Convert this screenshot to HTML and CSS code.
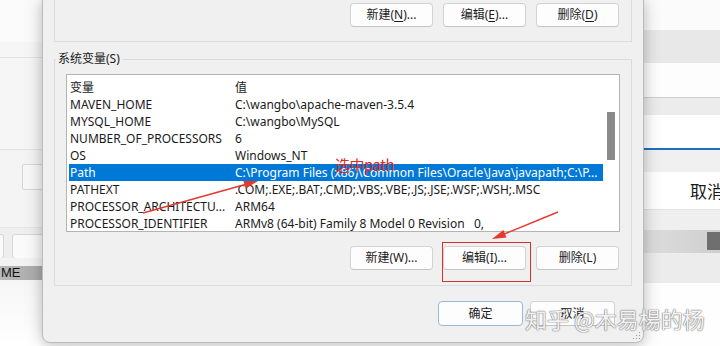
FILE: index.html
```html
<!DOCTYPE html>
<html lang="zh-CN">
<head>
<meta charset="utf-8">
<title>环境变量</title>
<link rel="stylesheet" href="styles.css">
</head>
<body>
<div class="desk">
  <div class="bg-left">
    <div class="bl-a"></div>
    <div class="bl-b"></div>
    <div class="bl-c"><div class="bl-input"></div></div>
    <div class="bl-d"><div class="bl-btn bl-btn1"></div><div class="bl-btn bl-btn2"></div></div>
    <div class="bl-e"></div>
    <div class="bl-f"><span>ME</span></div>
    <div class="bl-g"></div>
  </div>

  <div class="bg-right">
    <div class="br br-1"></div>
    <div class="br br-2"></div>
    <div class="br br-3"></div>
    <div class="br br-4"></div>
    <div class="br br-5"></div>
    <div class="br br-6"></div>
    <div class="br br-7"></div>
    <div class="br br-8">取消</div>
    <div class="br br-9"></div>
    <div class="br br-10"><div class="br-block"></div></div>
    <div class="br br-11"></div>
    <div class="br br-12"></div>
  </div>

  <div class="dialog">
    <div class="group-top">
      <div class="btn-row">
        <button class="btn">新建(<u>N</u>)...</button>
        <button class="btn">编辑(<u>E</u>)...</button>
        <button class="btn">删除(<u>D</u>)</button>
      </div>
    </div>

    <fieldset class="group-sys">
      <legend>系统变量(S)</legend>
      <div class="list">
        <div class="rows">
          <div class="row head"><span>变量</span><span>值</span></div>
          <div class="row"><span>MAVEN_HOME</span><span>C:\wangbo\apache-maven-3.5.4</span></div>
          <div class="row"><span>MYSQL_HOME</span><span>C:\wangbo\MySQL</span></div>
          <div class="row"><span>NUMBER_OF_PROCESSORS</span><span>6</span></div>
          <div class="row"><span>OS</span><span>Windows_NT</span></div>
          <div class="row sel"><span>Path</span><span>C:\Program Files (x86)\Common Files\Oracle\Java\javapath;C:\P...</span></div>
          <div class="row"><span>PATHEXT</span><span>.COM;.EXE;.BAT;.CMD;.VBS;.VBE;.JS;.JSE;.WSF;.WSH;.MSC</span></div>
          <div class="row"><span>PROCESSOR_ARCHITECTU...</span><span>ARM64</span></div>
          <div class="row"><span>PROCESSOR_IDENTIFIER</span><span>ARMv8 (64-bit) Family 8 Model 0 Revision&nbsp;&nbsp;&nbsp;0,</span></div>
        </div>
        <div class="scroll"><div class="thumb"></div></div>
      </div>
      <div class="btn-row btn-row-sys">
        <button class="btn">新建(W)...</button>
        <button class="btn">编辑(I)...</button>
        <button class="btn">删除(L)</button>
      </div>
    </fieldset>

    <div class="footer">
      <button class="btn btn-ok">确定</button>
      <button class="btn btn-cancel">取消</button>
    </div>

    <svg class="grip" width="8" height="8" viewBox="0 0 8 8">
      <rect x="6" y="0" width="1" height="1" fill="#9a9a9a"/>
      <rect x="3" y="3" width="1" height="1" fill="#9a9a9a"/>
      <rect x="6" y="3" width="1" height="1" fill="#9a9a9a"/>
      <rect x="0" y="6" width="1" height="1" fill="#9a9a9a"/>
      <rect x="3" y="6" width="1" height="1" fill="#9a9a9a"/>
      <rect x="6" y="6" width="1" height="1" fill="#9a9a9a"/>
    </svg>
  </div>

  <div class="note">选中path</div>
  <div class="redbox"></div>
  <svg class="arrows" width="720" height="346" viewBox="0 0 720 346">
    <line x1="143" y1="213" x2="247" y2="184" stroke="#e3392f" stroke-width="1.4"/>
    <polygon points="258,181 245.6,188.6 243.4,180.9" fill="#e3392f"/>
    <line x1="558" y1="212" x2="503" y2="234.5" stroke="#e3392f" stroke-width="1.4"/>
    <polygon points="492,239 506.5,237.4 503.4,230" fill="#e3392f"/>
  </svg>
  <div class="watermark">知乎 @木易楊的杨</div>
</div>
</body>
</html>
```

FILE: styles.css
```css
* { box-sizing: border-box; }
html, body { margin: 0; padding: 0; }
body {
  width: 720px;
  height: 346px;
  overflow: hidden;
  background: #ffffff;
  font-family: "Noto Sans", "Noto Sans CJK SC", sans-serif;
  font-size: 12px;
  color: #1b1b1b;
}
.desk { position: relative; width: 720px; height: 346px; overflow: hidden; }

/* background window, left */
.bg-left { position: absolute; left: 0; top: 0; width: 60px; height: 346px; display: flex; flex-direction: column; }
.bl-a { height: 58px; background: #fbfbfb; border-bottom: 1px solid #e4e4e4; box-shadow: inset 0 -15px 0 #f6f6f6; }
.bl-b { height: 92px; background: #f6f6f6; border-bottom: 1px solid #e2e2e2; }
.bl-c { height: 77px; background: #f4f4f4; padding: 14px 0 0 22px; }
.bl-input { height: 26px; border: 1px solid #d6d6d6; background: #f8f8f8; border-radius: 2px; }
.bl-d { height: 31px; background: #efefef; display: flex; gap: 8px; padding: 6px 0 0 0; border-top: 1px solid #e6e6e6; }
.bl-btn { height: 25px; background: #fafafa; border: 1px solid #d6d6d6; border-radius: 3px; }
.bl-btn1 { width: 4px; border-left: none; border-radius: 0 3px 3px 0; }
.bl-btn2 { width: 40px; }
.bl-e { height: 8px; background: #f3f3f3; }
.bl-f { height: 14px; background: linear-gradient(90deg, #b9b9b9, #a4a4a4); }
.bl-f span { display: block; font-family: "Liberation Sans", sans-serif; font-size: 13px; line-height: 14px; color: #111; padding-left: 1px; }
.bl-g { flex: 1; background: linear-gradient(180deg, #f6f6f6, #ffffff); }

/* background window, right */
.bg-right { position: absolute; left: 630px; top: 0; width: 90px; height: 346px; display: flex; flex-direction: column; }
.br { flex: none; }
.br-1 { height: 30px; background: #fbfbfb; }
.br-2 { height: 33px; background: #e8e8e8; }
.br-3 { height: 34px; background: #fdfdfd; }
.br-4 { height: 1px; background: #cfcfcf; }
.br-5 { height: 17px; background: #ececec; }
.br-6 { height: 33px; background: #ffffff; }
.br-7 { height: 24px; background: #f0f0f0; border-top: 2px solid #1f6fbf; }
.br-8 { height: 38px; background: #ffffff; font-family: "Noto Sans CJK SC", sans-serif; font-size: 17px; line-height: 38px; padding-left: 60px; color: #1a1a1a; border-bottom: 1px solid #e2e2e2; white-space: nowrap; overflow: hidden; }
.br-9 { height: 20px; background: #efefef; }
.br-10 { height: 23px; background: linear-gradient(90deg, #e0e0e0, #cfcfcf); padding: 2px 0 0 77px; }
.br-block { width: 20px; height: 18px; background: #6f6f6f; }
.br-11 { height: 30px; background: #ececec; }
.br-12 { flex: 1; background: #fefefe; }

/* dialog */
.dialog {
  position: absolute;
  left: 42px;
  top: -1px;
  width: 602px;
  height: 344px;
  background: #f0f0f0;
  border: 1px solid #bcbcbc;
  border-radius: 0 0 8px 8px;
  box-shadow: 0 0 18px rgba(0, 0, 0, 0.22), 0 4px 10px rgba(0, 0, 0, 0.08);
  padding: 0 11px;
}
.group-top {
  border: 1px solid #dcdcdc;
  border-top: none;
  padding: 3px 12px 14px 0;
}
.btn-row { display: flex; justify-content: flex-end; gap: 10px; }
.btn {
  width: 83px;
  height: 24px;
  padding: 0;
  margin: 0;
  background: #fdfdfd;
  border: 1px solid #d3d3d3;
  border-bottom-color: #c4c4c4;
  border-radius: 4px;
  font-family: "Noto Sans", "Noto Sans CJK SC", sans-serif;
  font-size: 12px;
  color: #1b1b1b;
  line-height: 22px;
}
.btn u { text-decoration-thickness: 1px; text-underline-offset: 2px; }

.group-sys {
  margin: 9px 0 0 0;
  padding: 7px 11px 15px 11px;
  border: 1px solid #dcdcdc;
  min-width: 0;
}
.group-sys legend {
  padding: 0 2px;
  margin-left: -10px;
  line-height: 16px;
  font-size: 12px;
  color: #1b1b1b;
}
.list {
  height: 158px;
  background: #ffffff;
  border: 1px solid #b4b4b4;
  display: flex;
  overflow: hidden;
}
.rows { flex: 1; padding: 4px 0 0 2px; min-width: 0; }
.row {
  display: grid;
  grid-template-columns: 165px 1fr;
  height: 17px;
  white-space: nowrap;
  color: #1b1b1b;
  overflow: hidden;
}
.row span { padding: 1px 0 0 1px; line-height: 16px; overflow: hidden; }
.row.sel { background: #0078d7; color: #ffffff; }
.scroll { width: 16px; flex: none; padding: 37px 0 0 4px; }
.thumb { width: 8px; height: 48px; background: #8a8a8a; }
.btn-row-sys { margin-top: 14px; margin-right: 1px; }

.footer { display: flex; justify-content: flex-end; gap: 7px; padding: 15px 17px 0 0; }
.btn-ok { width: 85px; height: 25px; border-color: #9ab8d8; }
.btn-cancel { width: 85px; height: 25px; }
.grip { position: absolute; right: 2px; bottom: 2px; }

/* annotations */
.note {
  position: absolute;
  left: 335px;
  top: 155px;
  font-family: "Noto Sans CJK SC", sans-serif;
  font-size: 15px;
  line-height: 20px;
  color: #e0291f;
  letter-spacing: -0.5px;
}
.redbox {
  position: absolute;
  left: 442px;
  top: 242px;
  width: 89px;
  height: 40px;
  border: 1.5px solid #d9302a;
}
.arrows { position: absolute; left: 0; top: 0; pointer-events: none; }
.watermark {
  position: absolute;
  left: 525px;
  top: 303px;
  font-family: "Noto Sans CJK SC", sans-serif;
  font-size: 22px;
  line-height: 30px;
  color: rgba(255, 255, 255, 0.92);
  text-shadow: 0 0 1px #777, 0 0 1px #777, 0 0 2px rgba(0,0,0,0.25);
  white-space: nowrap;
}
```
